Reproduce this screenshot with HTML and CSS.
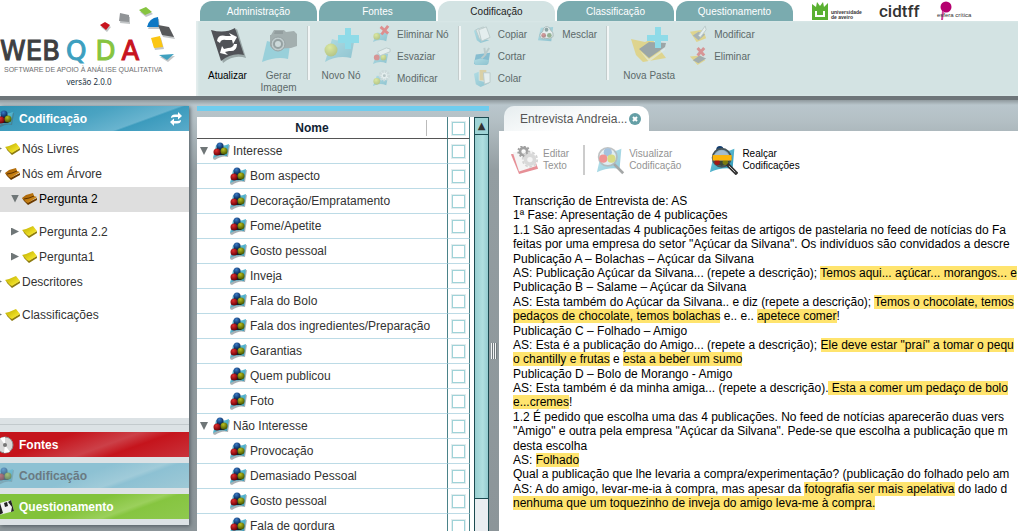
FILE: index.html
```html
<!DOCTYPE html>
<html lang="pt">
<head>
<meta charset="utf-8">
<title>webQDA</title>
<link rel="stylesheet" href="styles.css">
</head>
<body>
<svg class="defs" aria-hidden="true">
  <defs>
    <linearGradient id="gSheet" x1="0" y1="0" x2="1" y2="1"><stop offset="0" stop-color="#7fd4e6"/><stop offset="1" stop-color="#2793b3"/></linearGradient>
    <linearGradient id="gGold" x1="0" y1="0" x2="1" y2="1"><stop offset="0" stop-color="#b8a800"/><stop offset=".6" stop-color="#e8d820"/><stop offset="1" stop-color="#fff04a"/></linearGradient>
    <linearGradient id="gBrown" x1="0" y1="0" x2="1" y2="1"><stop offset="0" stop-color="#9a5500"/><stop offset="1" stop-color="#e09a20"/></linearGradient>
    <radialGradient id="gBlue" cx=".4" cy=".3" r=".7"><stop offset="0" stop-color="#3a7cc8"/><stop offset="1" stop-color="#06224e"/></radialGradient>
    <radialGradient id="gRed" cx=".4" cy=".3" r=".7"><stop offset="0" stop-color="#e03030"/><stop offset="1" stop-color="#6a0006"/></radialGradient>
    <radialGradient id="gGreen" cx=".4" cy=".3" r=".7"><stop offset="0" stop-color="#b8c020"/><stop offset="1" stop-color="#4a5600"/></radialGradient>
    <radialGradient id="gLime" cx=".4" cy=".3" r=".7"><stop offset="0" stop-color="#e8f040"/><stop offset="1" stop-color="#8a9a00"/></radialGradient>
  </defs>
  <symbol id="node" viewBox="0 0 18 18">
    <path d="M5 4Q11 6 18 3L16 15Q10 13 3 18L1 17Z" fill="#53646b" opacity=".5"/>
    <path d="M4 3Q11 5 17 2L15 14Q8 12 1 16Z" fill="url(#gSheet)"/>
    <path d="M6 5H11L15 10L12 13L4 13L2 10Z" fill="#10202c"/>
    <circle cx="8" cy="4" r="3.500" fill="url(#gBlue)"/><circle cx="5" cy="10" r="3.500" fill="url(#gRed)"/><circle cx="12" cy="9" r="3.500" fill="url(#gGreen)"/>
  </symbol>
  <symbol id="folder" viewBox="0 0 16 14"><path d="M1 5L2 8L7 13L15 8V6L7 10Z" fill="#8c7a10"/><path d="M0 5L4 4L11 1L15 6L7 11L5 10Z" fill="url(#gGold)"/></symbol>
  <symbol id="folder-open" viewBox="0 0 16 14"><path d="M0 6L2 9L6 13L15 8V6L7 10Z" fill="#6b3b00"/><path d="M0 6L4 3L11 1L12 4L15 5L6 11L4 10Z" fill="url(#gBrown)"/><path d="M2 7L7 6L12 4" stroke="#5d3300" fill="none"/></symbol>
  <symbol id="refresh" viewBox="0 0 14 14"><path d="M2 6Q2 2 7 2.500H9V0L13 4L9 7.500V5H6Q4 5 2 6ZM12 8Q12 12 7 11.500H5V14L1 10L5 6.500V9H8Q10 9 12 8Z" fill="currentColor"/></symbol>
  <symbol id="sheet-refresh" viewBox="0 0 38 38">
    <path d="M4 6Q18 10 28 3L37 32Q25 28 14 37Z" fill="#9aa8a8"/><path d="M2 4Q16 8 26 2L35 29Q23 26 12 35Z" fill="#505257"/>
    <path d="M8 15Q9 8 17 10L22 10L20 7L28 11L24 18L23 14L17 14Q12 13 11 17ZM28 18Q28 26 20 25L16 26L19 29L11 27L13 20L15 23L19 22Q24 22 25 18Z" fill="#fff"/>
  </symbol>
  <symbol id="camera" viewBox="0 0 38 38">
    <path d="M7 15Q17 19 31 12L28 33Q17 30 2 36Z" fill="#45b4cf"/>
    <path d="M11 9L14 4H24L26 6L34 5L37 8V20L31 22L13 23L10 20V9Z" fill="#5d6264"/><circle cx="18" cy="18" r="7" fill="#a8adaf" stroke="#3d4244"/><circle cx="18" cy="18" r="4" fill="#c5cccd" stroke="#3d4244" stroke-width="2"/><path d="M15 5H23V8H14Z" fill="#34393b"/>
  </symbol>
  <symbol id="node-new" viewBox="0 0 38 38"><path d="M10 13Q20 17 33 11L29 32Q15 29 3 36Z" fill="url(#gSheet)"/><path d="M23 2H29V9H37V17H29V23H23V17H16V9H23Z" fill="#2bd0f0"/><circle cx="9" cy="24" r="6.500" fill="url(#gLime)"/></symbol>
  <symbol id="node-delete" viewBox="0 0 20 20"><path d="M5 8Q11 9 17 7L15 17Q8 14 1 18Z" fill="url(#gSheet)"/><circle cx="5" cy="12" r="3.500" fill="url(#gLime)"/><path d="M9 2L17 9M17 1L10 10" stroke="#e11" stroke-width="3"/></symbol>
  <symbol id="node-erase" viewBox="0 0 20 20"><path d="M5 7Q11 8 17 7L15 17Q8 14 1 18Z" fill="url(#gSheet)"/><circle cx="5" cy="11" r="3" fill="#d22"/><circle cx="12" cy="11" r="3" fill="url(#gLime)"/><path d="M6 5L15 1L19 2V5L9 9Q6 8 6 5Z" fill="#fff" stroke="#9aa"/></symbol>
  <symbol id="node-edit" viewBox="0 0 20 20"><path d="M5 7Q11 8 17 7L15 17Q8 14 1 18Z" fill="url(#gSheet)"/><circle cx="5" cy="13" r="3.500" fill="url(#gLime)"/><circle cx="13" cy="7" r="4.500" fill="#fff" stroke="#c2ccce" stroke-width="3" stroke-dasharray="2 1"/><circle cx="13" cy="7" r="1.500" fill="#8a9a9c"/></symbol>
  <symbol id="copy" viewBox="0 0 20 20"><path d="M1 6L6 3L9 14L17 16L8 19L4 16Z" fill="url(#gSheet)"/><path d="M3 5L11 2L13 13L7 15Z" fill="#eee" stroke="#9aa"/><path d="M6 5L14 2L18 13L9 17Z" fill="#fff" stroke="#9aa"/></symbol>
  <symbol id="cut" viewBox="0 0 20 20"><path d="M3 8L18 6L16 18L1 18Z" fill="#1686b4"/><path d="M1 14L8 12L17 14L15 19H2Z" fill="url(#gSheet)"/><path d="M12 1L13 9M17 1L12 9L9 12" stroke="#9aa" stroke-width="2" fill="none"/></symbol>
  <symbol id="paste" viewBox="0 0 20 20"><path d="M1 5L6 3V12L17 15L8 19L3 16Z" fill="url(#gSheet)"/><path d="M7 1H14V12H7Z" fill="#e3b54c"/><path d="M11 4H18V14L12 16Z" fill="#fff" stroke="#9aa"/></symbol>
  <symbol id="merge" viewBox="0 0 20 20"><path d="M4 3L17 2L15 17L1 16Z" fill="url(#gSheet)"/><path d="M9 2Q13 1 14 5Q18 8 17 12Q14 16 9 14Q4 16 3 11Q3 8 6 7Q6 3 9 2Z" fill="#fff" stroke="#677"/><circle cx="10" cy="5" r="2" fill="#244"/><circle cx="7" cy="11" r="2.500" fill="url(#gRed)"/><circle cx="13" cy="11" r="2.500" fill="#3a6a20"/></symbol>
  <symbol id="dir-new" viewBox="0 0 38 38"><path d="M1 13L15 16L22 13L27 20L36 32L13 36L6 29Z" fill="#f0c010"/><path d="M9 23L19 16L36 17L35 21L19 32Z" fill="#4a4d50"/><path d="M10 25L19 33L35 22V24L19 36Z" fill="#fff" opacity=".6"/><path d="M25 1H31V9H38V15H31V22H25V15H17V9H25Z" fill="#2bd0f0"/></symbol>
  <symbol id="dir-edit" viewBox="0 0 20 20"><path d="M1 7L15 5L18 14L8 18Z" fill="#f0c010"/><path d="M4 11L10 7L17 10L10 16Z" fill="#6a6d70"/><path d="M10 11L17 1L18 5L12 13Z" fill="#fff" stroke="#9aa"/></symbol>
  <symbol id="dir-delete" viewBox="0 0 20 20"><path d="M1 10L12 9L17 14L9 19Z" fill="#f0c010"/><path d="M4 14L11 9L18 12L10 17Z" fill="#5a5d60"/><path d="M9 1L16 9M16 1L9 9" stroke="#d22" stroke-width="3"/></symbol>
  <symbol id="gears" viewBox="0 0 32 32"><path d="M1 9L24 6L31 25L10 31Z" fill="#cf2130"/><path d="M3 7L25 5L29 22L10 28Z" fill="#ececec"/><circle cx="15" cy="6" r="4" fill="none" stroke="#444" stroke-width="3"/><circle cx="15" cy="6" r="6" fill="none" stroke="#444" stroke-width="2" stroke-dasharray="2 2"/><circle cx="22" cy="15" r="5" fill="none" stroke="#b5b5b5" stroke-width="4"/><circle cx="22" cy="15" r="8" fill="none" stroke="#aaa" stroke-width="2" stroke-dasharray="3 2"/></symbol>
  <symbol id="lens" viewBox="0 0 32 32"><path d="M6 7Q16 8 28 3L26 25Q13 23 1 29Z" fill="url(#gSheet)"/><circle cx="13" cy="12" r="10" fill="#d5e6ec" opacity=".85" stroke="#6d7577" stroke-width="2"/><circle cx="13" cy="7" r="4.500" fill="#4b86c0"/><circle cx="8" cy="14" r="4.500" fill="#e02a2a"/><circle cx="17" cy="14" r="4.500" fill="#b0b810"/><path d="M20 20L30 30" stroke="#4c5152" stroke-width="3"/></symbol>
  <symbol id="lens-mark" viewBox="0 0 32 32"><path d="M6 7Q16 8 28 3L26 25Q13 23 1 29Z" fill="url(#gSheet)"/><circle cx="12" cy="4" r="4" fill="#123d70"/><circle cx="14" cy="13" r="10" fill="#7fa5b8" stroke="#46545a" stroke-width="2"/><path d="M5 11Q14 -1 22 10Z" fill="#a5bccc"/><path d="M5 16H23Q20 22 14 22T5 16Z" fill="#3a4638"/><circle cx="9" cy="18" r="3" fill="#a01818"/><circle cx="18" cy="18" r="3" fill="#7a7c10"/><path d="M4 10H25V16H4Z" fill="#fdb50a"/><path d="M20 20L31 31" stroke="#333" stroke-width="4"/><path d="M22 22L29 29" stroke="#ccc"/></symbol>
</svg>

<header class="top">
  <div class="brand">
    <div class="wordmark"><span class="w">WEB</span><span class="q">Q</span><span class="d">D</span><span class="a">A</span></div>
    <div class="tagline">SOFTWARE DE APOIO À ANÁLISE QUALITATIVA</div>
    <div class="version">versão 2.0.0</div>
    <svg class="confetti" viewBox="0 0 78 56" aria-hidden="true">
      <g fill="#9aa0a2" opacity=".6" transform="translate(1 2)"><path d="M1 18L6 15L11 18L7 23Z"/><path d="M21 6L30 8V15L20 14Z"/><path d="M40 3L47 0L53 5L46 8Z"/><path d="M48 20Q50 11 59 10L60 20Z"/><path d="M59 18L70 20L75 30L63 28Z"/><path d="M52 31L61 29L64 40L55 41Z"/><path d="M60 48L75 47L68 53Z"/></g>
      <path d="M1 18L6 15L11 18L7 23Z" fill="#c8141e"/><path d="M21 6L30 8V15L20 14Z" fill="#919497"/><path d="M40 3L47 0L53 5L46 8Z" fill="#86c440"/><path d="M48 20Q50 11 59 10L60 20Z" fill="#0d77c4"/><path d="M59 18L70 20L75 30L63 28Z" fill="#58595b"/><path d="M52 31L61 29L64 40L55 41Z" fill="#fbc613"/><path d="M60 48L75 47L68 53Z" fill="#3fa0bf"/>
    </svg>
  </div>
  <div class="ribbon">
    <div class="strip">
      <nav class="tabs">
        <button>Administração</button><button>Fontes</button><button class="on">Codificação</button><button>Classificação</button><button>Questionamento</button>
      </nav>
      <div class="partners">
        <svg width="17" height="18" viewBox="0 0 17 18" aria-hidden="true"><path d="M0 2L4 5L5 0L8 4L11 0L12 5L16 1V18H0Z" fill="#5ab031"/><path d="M4 9V14H12V9" fill="none" stroke="#fff" stroke-width="2"/></svg>
        <span class="ua">universidade<br>de aveiro</span>
        <span class="cid">cidtff</span>
        <span class="esf"><svg width="12" height="20" viewBox="0 0 12 20" aria-hidden="true"><circle cx="6" cy="6" r="5.500" fill="#b5006f"/><path d="M3 10L2 19" stroke="#d0409a" stroke-width="2"/></svg><span>esfera crítica</span></span>
      </div>
    </div>
    <div class="tools">
      <div class="group">
        <button class="big live"><svg><use href="#sheet-refresh"/></svg>Atualizar</button>
        <button class="big"><svg><use href="#camera"/></svg>Gerar<br>Imagem</button>
      </div>
      <div class="group">
        <button class="big wide"><svg><use href="#node-new"/></svg>Novo Nó</button>
        <div class="col">
          <button><svg><use href="#node-delete"/></svg>Eliminar Nó</button>
          <button><svg><use href="#node-erase"/></svg>Esvaziar</button>
          <button><svg><use href="#node-edit"/></svg>Modificar</button>
        </div>
      </div>
      <div class="group roomy">
        <div class="col">
          <button><svg><use href="#copy"/></svg>Copiar</button>
          <button><svg><use href="#cut"/></svg>Cortar</button>
          <button><svg><use href="#paste"/></svg>Colar</button>
        </div>
        <div class="col">
          <button><svg><use href="#merge"/></svg>Mesclar</button>
        </div>
      </div>
      <div class="group roomy">
        <button class="big wider"><svg><use href="#dir-new"/></svg>Nova Pasta</button>
        <div class="col">
          <button><svg><use href="#dir-edit"/></svg>Modificar</button>
          <button><svg><use href="#dir-delete"/></svg>Eliminar</button>
        </div>
      </div>
    </div>
  </div>
</header>

<main class="work">
  <aside class="side">
    <h2 class="bar blue"><svg class="ico"><use href="#node"/></svg>Codificação<button class="reload" aria-label="Recarregar"><svg><use href="#refresh"/></svg></button></h2>
    <ul class="tree">
      <li><i class="arrow"></i><svg><use href="#folder"/></svg>Nós Livres</li>
      <li><i class="arrow open"></i><svg><use href="#folder-open"/></svg>Nós em Árvore</li>
      <li class="sub sel"><i class="arrow open"></i><svg><use href="#folder-open"/></svg>Pergunta 2</li>
      <li class="sub apart"><i class="arrow"></i><svg><use href="#folder"/></svg>Pergunta 2.2</li>
      <li class="sub"><i class="arrow"></i><svg><use href="#folder"/></svg>Pergunta1</li>
      <li><i class="arrow"></i><svg><use href="#folder"/></svg>Descritores</li>
      <li class="apart"><i class="arrow"></i><svg><use href="#folder"/></svg>Classificações</li>
    </ul>
    <nav class="stack">
      <button class="bar red"><svg class="ico" viewBox="0 0 18 18"><circle cx="9" cy="9" r="8" fill="#d9d9d9" stroke="#8d8d8d"/><path d="M9 9L4 2L9 1ZM9 9L14 16L8 17Z" fill="#fff"/><circle cx="9" cy="9" r="2" fill="#777"/></svg>Fontes</button>
      <button class="bar pale"><svg class="ico"><use href="#node"/></svg>Codificação</button>
      <button class="bar green"><svg class="ico" viewBox="0 0 18 18"><path d="M0 6L15 2L18 13L3 17Z" fill="#f0f0f0"/><path d="M0 6L4 5L7 15L3 17ZM8 5L11 4L12 8L9 9ZM12 4L15 2L18 13L15 14L16 9Z" fill="#222"/></svg>Questionamento</button>
    </nav>
  </aside>

  <section class="nodes">
    <div class="accent"></div>
    <div class="grid">
      <table>
        <thead><tr><th scope="col"><span class="head">Nome</span></th><th class="pick"><input type="checkbox" aria-label="Selecionar todos"></th></tr></thead>
        <tbody>
          <tr><td><span class="cell root"><i class="arrow open"></i><svg><use href="#node"/></svg>Interesse</span></td><td class="pick"><input type="checkbox" aria-label="Interesse"></td></tr>
          <tr><td><span class="cell"><svg><use href="#node"/></svg>Bom aspecto</span></td><td class="pick"><input type="checkbox" aria-label="Bom aspecto"></td></tr>
          <tr><td><span class="cell"><svg><use href="#node"/></svg>Decoração/Empratamento</span></td><td class="pick"><input type="checkbox" aria-label="Decoração/Empratamento"></td></tr>
          <tr><td><span class="cell"><svg><use href="#node"/></svg>Fome/Apetite</span></td><td class="pick"><input type="checkbox" aria-label="Fome/Apetite"></td></tr>
          <tr><td><span class="cell"><svg><use href="#node"/></svg>Gosto pessoal</span></td><td class="pick"><input type="checkbox" aria-label="Gosto pessoal"></td></tr>
          <tr><td><span class="cell"><svg><use href="#node"/></svg>Inveja</span></td><td class="pick"><input type="checkbox" aria-label="Inveja"></td></tr>
          <tr><td><span class="cell"><svg><use href="#node"/></svg>Fala do Bolo</span></td><td class="pick"><input type="checkbox" aria-label="Fala do Bolo"></td></tr>
          <tr><td><span class="cell"><svg><use href="#node"/></svg>Fala dos ingredientes/Preparação</span></td><td class="pick"><input type="checkbox" aria-label="Fala dos ingredientes/Preparação"></td></tr>
          <tr><td><span class="cell"><svg><use href="#node"/></svg>Garantias</span></td><td class="pick"><input type="checkbox" aria-label="Garantias"></td></tr>
          <tr><td><span class="cell"><svg><use href="#node"/></svg>Quem publicou</span></td><td class="pick"><input type="checkbox" aria-label="Quem publicou"></td></tr>
          <tr><td><span class="cell"><svg><use href="#node"/></svg>Foto</span></td><td class="pick"><input type="checkbox" aria-label="Foto"></td></tr>
          <tr><td><span class="cell root"><i class="arrow open"></i><svg><use href="#node"/></svg>Não Interesse</span></td><td class="pick"><input type="checkbox" aria-label="Não Interesse"></td></tr>
          <tr><td><span class="cell"><svg><use href="#node"/></svg>Provocação</span></td><td class="pick"><input type="checkbox" aria-label="Provocação"></td></tr>
          <tr><td><span class="cell"><svg><use href="#node"/></svg>Demasiado Pessoal</span></td><td class="pick"><input type="checkbox" aria-label="Demasiado Pessoal"></td></tr>
          <tr><td><span class="cell"><svg><use href="#node"/></svg>Gosto pessoal</span></td><td class="pick"><input type="checkbox" aria-label="Gosto pessoal"></td></tr>
          <tr><td><span class="cell"><svg><use href="#node"/></svg>Fala de gordura</span></td><td class="pick"><input type="checkbox" aria-label="Fala de gordura"></td></tr>
        </tbody>
      </table>
      <div class="scroll"><button aria-label="Subir">▲</button><div class="track"><div class="thumb"></div></div></div>
    </div>
  </section>

  <div class="splitter"><i></i></div>

  <section class="doc">
    <div class="doctab">Entrevista Andreia...<button aria-label="Fechar"><svg viewBox="0 0 12 12"><circle cx="6" cy="6" r="6" fill="#659fa6"/><path d="M4 4L8 8M8 4L4 8" stroke="#fff" stroke-width="2"/></svg></button></div>
    <div class="page">
      <div class="doctools">
        <button class="first"><svg><use href="#gears"/></svg><span>Editar<br>Texto</span></button>
        <button class="second"><svg><use href="#lens"/></svg><span>Visualizar<br>Codificação</span></button>
        <button class="live"><svg><use href="#lens-mark"/></svg><span>Realçar<br>Codificações</span></button>
      </div>
      <article class="text">
        <p>Transcrição de Entrevista de: AS</p>
        <p>1ª Fase: Apresentação de 4 publicações</p>
        <p>1.1 São apresentadas 4 publicações feitas de artigos de pastelaria no feed de notícias do Fa<br>feitas por uma empresa do setor "Açúcar da Silvana". Os indivíduos são convidados a descre</p>
        <p>Publicação A – Bolachas – Açúcar da Silvana</p>
        <p>AS: Publicação Açúcar da Silvana... (repete a descrição); <mark>Temos aqui... açúcar... morangos... e</mark></p>
        <p>Publicação B – Salame – Açúcar da Silvana</p>
        <p>AS: Esta também do Açúcar da Silvana.. e diz (repete a descrição); <mark>Temos o chocolate, temos<br>pedaços de chocolate, temos bolachas</mark> e.. e.. <mark>apetece comer</mark>!</p>
        <p>Publicação C – Folhado – Amigo</p>
        <p>AS: Esta é a publicação do Amigo... (repete a descrição); <mark>Ele deve estar "praí" a tomar o pequ<br>o chantilly e frutas</mark> e <mark>esta a beber um sumo</mark></p>
        <p>Publicação D – Bolo de Morango - Amigo</p>
        <p>AS: Esta também é da minha amiga... (repete a descrição).<mark> Esta a comer um pedaço de bolo<br>e...cremes</mark>!</p>
        <p>1.2 É pedido que escolha uma das 4 publicações. No feed de notícias aparecerão duas vers<br>"Amigo" e outra pela empresa "Açúcar da Silvana". Pede-se que escolha a publicação que m<br>desta escolha</p>
        <p>AS: <mark>Folhado</mark></p>
        <p>Qual a publicação que lhe levaria a compra/experimentação? (publicação do folhado pelo am</p>
        <p>AS: A do amigo, levar-me-ia à compra, mas apesar da <mark>fotografia ser mais apelativa</mark> do lado d<br><mark>nenhuma que um toquezinho de inveja do amigo leva-me à compra.</mark></p>
      </article>
    </div>
  </section>
</main>
</body>
</html>
```
FILE: styles.css
```css
* { box-sizing: border-box; }
body {
  margin: 0;
  height: 100vh;
  display: flex;
  flex-direction: column;
  overflow: hidden;
  font: 12px "Liberation Sans", Arial, sans-serif;
  color: #333;
  background: #fff;
}
button {
  font: inherit;
  color: inherit;
  border: 0;
  padding: 0;
  background: none;
}
svg { flex: none; display: block; }
.defs { position: absolute; width: 0; height: 0; }

/* header */
.top { display: flex; flex: none; height: 96px; }
.brand { position: relative; flex: none; width: 196px; padding-top: 38px; }
.wordmark {
  display: flex;
  gap: 6px;
  font: 26px/26px "DejaVu Sans", sans-serif;
  color: #3e3f41;
  -webkit-text-stroke: 1px currentColor;
}
.wordmark .q { color: #3d9fbf; }
.wordmark .d { color: #86c440; padding-left: 3px; }
.wordmark .a { color: #c8141e; }
.tagline { font-size: 7px; line-height: 12px; padding-left: 4px; color: #6d6e70; white-space: nowrap; }
.version { font: 8px/12px "Noto Sans", sans-serif; width: 178px; text-align: center; color: #234; }
.confetti { position: absolute; left: 99px; top: 7px; width: 78px; height: 56px; }

.ribbon { flex: 1; min-width: 0; display: flex; flex-direction: column; }
.strip { display: flex; height: 21px; padding: 1px 0 0 4px; }
.tabs { display: flex; gap: 2px; }
.tabs button {
  width: 117px;
  height: 20px;
  border-radius: 12px 12px 0 0;
  background: #7aabaf;
  color: #fff;
  font-size: 10px;
}
.tabs .on { background: #d3e3e3; color: #222; }
.partners { display: flex; align-items: center; padding-left: 19px; color: #333; white-space: nowrap; }
.ua { font: bold 5px/5px "Liberation Sans", sans-serif; padding: 7px 0 0 2px; width: 49px; }
.cid { font: 500 17px/18px Roboto, sans-serif; width: 59px; padding-left: 1px; }
.esf { display: grid; }
.esf svg, .esf span { grid-area: 1 / 1; }
.esf svg { margin-left: 3px; }
.esf span { font: 6px/8px "Liberation Sans", sans-serif; padding-top: 10px; }

.tools {
  flex: 1;
  display: flex;
  padding: 5px 0 0 6px;
  background: #d3e3e3;
  box-shadow: inset 2px 0 2px #e4eeee;
  font-size: 10px;
  color: #5c6969;
}
.group { display: flex; height: 54px; border-right: 2px solid #f2f6f6; box-shadow: inset -1px 0 #c3cccc; padding-right: 4px; }
.group + .group { padding-left: 4px; }
.group + .roomy { padding-left: 8px; }
.group:last-child { border: 0; box-shadow: none; }
.tools .big { display: flex; flex-direction: column; align-items: center; width: 51px; height: 66px; line-height: 12px; white-space: nowrap; }
.tools .wide { width: 54px; }
.tools .wider { width: 64px; margin-right: 4px; }
.big svg { width: 38px; height: 38px; margin: 0 0 6px; }
.tools svg { opacity: .4; }
.tools .live { color: #000; }
.tools .live svg { opacity: 1; }
.col { display: flex; flex-direction: column; padding-right: 6px; }
.col button { display: flex; align-items: center; gap: 6px; height: 22px; padding: 0 0 6px 4px; white-space: nowrap; }
.col svg { width: 19px; height: 19px; }

/* work area */
.work {
  flex: 1;
  min-height: 0;
  display: flex;
  border-top: 4px solid #6d7579;
  padding-top: 6px;
  background: linear-gradient(#909a9e, #b9c6cc 5px, #b4c0c5 20px, #939da1 70px, #8c9599);
}
.side {
  flex: none;
  width: 189px;
  margin-bottom: 6px;
  display: flex;
  flex-direction: column;
  background: #fff;
  box-shadow: 1px 1px 4px #4f5a60;
}
.bar {
  display: flex;
  align-items: center;
  flex: none;
  width: 100%;
  height: 25px;
  margin: 0;
  font-size: 12px;
  font-weight: bold;
  color: #fff;
}
.bar .ico { width: 18px; height: 18px; margin: 0 5px 0 -4px; }
.blue { background: linear-gradient(160deg, #2f93b5, #4aa3c2 45%, #69b4cf 70%, #3c9bbd 72%, #5aabca); }
.reload { margin-left: auto; padding-right: 6px; color: #fff; }
.reload svg { width: 14px; height: 14px; }
.tree { flex: 1; list-style: none; margin: 0; padding: 6px 0 0; }
.tree li { display: flex; align-items: center; height: 25px; padding-bottom: 2px; }
.tree svg { width: 16px; height: 14px; margin-right: 1px; }
.tree .arrow { margin: 0 3px 0 -6px; }
.tree .sub .arrow { margin-left: 11px; }
.tree .apart { margin-top: 8px; }
.tree .sel { background: #dedede; color: #000; }
.arrow { flex: none; width: 8px; height: 8px; background: #6f7677; clip-path: polygon(0 0, 100% 50%, 0 100%); }
.arrow.open { clip-path: polygon(0 0, 100% 0, 50% 100%); }
.stack {
  flex: none;
  display: flex;
  flex-direction: column;
  gap: 6px;
  padding: 14px 0 6px;
  background: linear-gradient(#dce2e5 6px, #c3cacd 6px, #c3cacd 7px, #dce2e5 7px);
}
.red { background: linear-gradient(160deg, #c5141c 30%, #cc4048 55%, #c5141c 68%, #c9333c); }
.pale { background: linear-gradient(160deg, #8dc1d3 45%, #a0cbd9 65%, #8dc1d3 70%, #9fc9d6); color: #6a7a82; }
.pale svg { opacity: .5; }
.green { background: linear-gradient(160deg, #82c23a 45%, #9bd05c 65%, #86c540 70%, #8fc94f); }

.nodes { flex: none; width: 300px; padding-left: 8px; display: flex; flex-direction: column; }
.accent { flex: none; height: 5px; background: #6fcdee; margin-bottom: 6px; }
.grid { flex: 1; min-height: 0; display: flex; background: #fff; overflow: hidden; }
table { flex: 1; border-collapse: separate; border-spacing: 0; table-layout: fixed; align-self: flex-start; }
th, td { height: 25px; padding: 0; border-bottom: 1px solid #bcdbe6; }
th { height: 22px; border-color: #555; color: #123; }
.head { display: block; line-height: 16px; padding-left: 1px; margin-right: 20px; border-right: 1px solid #bbb; }
.pick { width: 23px; border-left: 1px solid #4a8289; border-right: 1px solid #4a8289; }
.pick input {
  appearance: none;
  display: block;
  width: 13px;
  height: 13px;
  margin: 0 auto;
  border: 1px solid #9fd3d8;
  background: #fff;
  box-shadow: 0 0 0 1px #e3ecee;
}
th.pick input { margin-top: 2px; }
.cell { display: flex; align-items: center; padding-left: 32px; white-space: nowrap; }
.cell.root { padding-left: 3px; }
.cell svg { width: 18px; height: 18px; margin-right: 3px; }
.cell .arrow { margin-right: 4px; }
.scroll {
  flex: none;
  width: 15px;
  margin-left: 4px;
  display: flex;
  flex-direction: column;
  border: 1px solid #1c4a50;
  border-bottom: 0;
  background: #eaedf1;
}
.scroll button { flex: none; height: 17px; border-bottom: 1px solid #1c4a50; background: #9fd4d6; color: #333; font: 10px/16px "DejaVu Sans", sans-serif; }
.track { flex: 1; min-height: 0; }
.thumb { height: 92%; border-bottom: 1px solid #1c4a50; background: linear-gradient(90deg, #9acfd1, #b0dfe0 60%, #94cbcf); }

.splitter { flex: none; width: 10px; display: flex; align-items: center; justify-content: center; padding-top: 64px; }
.splitter i { width: 6px; height: 16px; background: repeating-linear-gradient(90deg, #f3f5f6 0 1px, #70797d 1px 2px); }

/* document */
.doc { flex: 1; min-width: 0; display: flex; flex-direction: column; }
.doctab {
  display: flex;
  align-items: center;
  align-self: flex-start;
  gap: 2px;
  height: 25px;
  margin-left: 5px;
  padding: 0 8px 0 16px;
  border-radius: 10px 10px 0 0;
  background: linear-gradient(160deg, #e6edef, #fff 60%);
  color: #555;
}
.doctab svg { width: 12px; height: 12px; }
.page { flex: 1; min-height: 0; background: #fff; overflow: hidden; }
.doctools { display: flex; padding: 14px 0 0 11px; font-size: 10px; line-height: 12px; color: #939393; }
.doctools button { display: flex; align-items: center; gap: 4px; text-align: left; height: 30px; }
.doctools svg { width: 29px; height: 29px; opacity: .5; }
.doctools .live { color: #000; }
.doctools .live svg { opacity: 1; }
.doctools .first { padding-right: 14px; border-right: 2px solid #ccc; }
.doctools .second { padding: 0 28px 0 11px; }
.text { padding: 19px 0 0 14px; color: #000; white-space: nowrap; line-height: 1.2; }
.text p { margin: 0; }
mark { background: #ffe46e; color: inherit; }
```
